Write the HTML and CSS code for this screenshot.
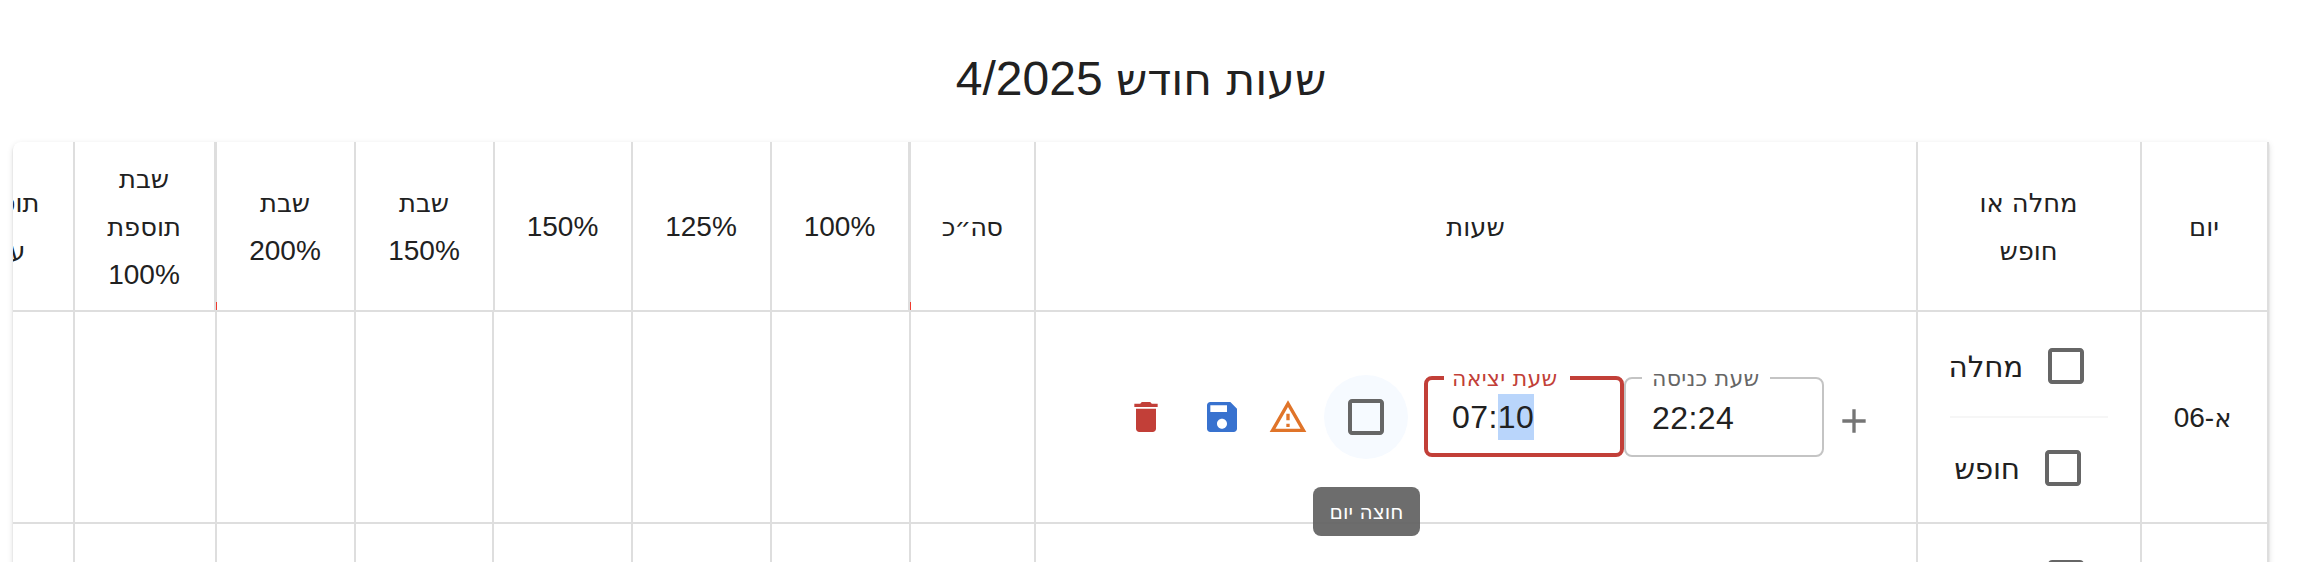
FILE: index.html
```html
<!DOCTYPE html>
<html lang="he" dir="rtl">
<head>
<meta charset="utf-8">
<title>שעות חודש</title>
<link rel="stylesheet" href="styles.css">
</head>
<body>
<h1 class="title"><span class="he">שעות חודש</span> 4/2025</h1>
<main class="paper">
  <div class="row head">
    <div class="cell"><span class="he">יום</span></div>
    <div class="cell"><span class="he">מחלה או</span><span class="he">חופש</span></div>
    <div class="cell"><span class="he">שעות</span></div>
    <div class="cell thick"><span class="he total">סה״כ</span></div>
    <div class="cell"><span dir="ltr">100%</span></div>
    <div class="cell"><span dir="ltr">125%</span></div>
    <div class="cell"><span dir="ltr">150%</span></div>
    <div class="cell"><span class="he">שבת</span><span dir="ltr">150%</span></div>
    <div class="cell thick"><span class="he">שבת</span><span dir="ltr">200%</span></div>
    <div class="cell"><span class="he">שבת</span><span class="he">תוספת</span><span dir="ltr">100%</span></div>
    <div class="cell"><span class="he">תוספת</span><span class="he">ערב</span></div>
  </div>
  <div class="row body">
    <div class="cell day"><span><span class="he">א</span>-06</span></div>
    <div class="cell absence">
      <label class="option"><span class="check"><svg viewBox="0 0 24 24"><path d="M19 5v14H5V5h14m0-2H5c-1.1 0-2 .9-2 2v14c0 1.1.9 2 2 2h14c1.1 0 2-.9 2-2V5c0-1.1-.9-2-2-2z"/></svg></span><span class="name sick"><span class="he">מחלה</span></span></label>
      <div class="divider"></div>
      <label class="option"><span class="check"><svg viewBox="0 0 24 24"><path d="M19 5v14H5V5h14m0-2H5c-1.1 0-2 .9-2 2v14c0 1.1.9 2 2 2h14c1.1 0 2-.9 2-2V5c0-1.1-.9-2-2-2z"/></svg></span><span class="name vacation"><span class="he">חופש</span></span></label>
    </div>
    <div class="cell hours" dir="ltr">
      <svg class="icon delete" viewBox="0 0 24 24"><path d="M6 19c0 1.1.9 2 2 2h8c1.1 0 2-.9 2-2V7H6v12zM19 4h-3.5l-1-1h-5l-1 1H5v2h14V4z"/></svg>
      <svg class="icon save" viewBox="0 0 24 24"><path d="M17 3H5c-1.11 0-2 .9-2 2v14c0 1.1.89 2 2 2h14c1.1 0 2-.9 2-2V7l-4-4zm-5 16c-1.66 0-3-1.34-3-3s1.34-3 3-3 3 1.34 3 3-1.34 3-3 3zm3-10H5V5h10v4z"/></svg>
      <svg class="icon warning" viewBox="0 0 24 24"><path d="M12 5.99L19.53 19H4.47L12 5.99M12 2L1 21h22L12 2zm1 14h-2v2h2v-2zm0-6h-2v4h2v-4z"/></svg>
      <span class="check hovered"><svg viewBox="0 0 24 24"><path d="M19 5v14H5V5h14m0-2H5c-1.1 0-2 .9-2 2v14c0 1.1.9 2 2 2h14c1.1 0 2-.9 2-2V5c0-1.1-.9-2-2-2z"/></svg><span class="tooltip" dir="rtl"><span class="he">חוצה יום</span></span></span>
      <fieldset class="field error"><legend><span class="he">שעת יציאה</span></legend><div class="time">07:<mark>10</mark></div></fieldset>
      <fieldset class="field"><legend><span class="he">שעת כניסה</span></legend><div class="time">22:24</div></fieldset>
      <svg class="icon add" viewBox="0 0 24 24"><path d="M19 13h-6v6h-2v-6H5v-2h6V5h2v6h6v2z"/></svg>
    </div>
    <div class="cell"></div><div class="cell"></div><div class="cell"></div><div class="cell"></div><div class="cell"></div><div class="cell"></div><div class="cell"></div><div class="cell"></div>
  </div>
  <div class="row body last">
    <div class="cell"></div>
    <div class="cell absence">
      <label class="option"><span class="check"><svg viewBox="0 0 24 24"><path d="M19 5v14H5V5h14m0-2H5c-1.1 0-2 .9-2 2v14c0 1.1.9 2 2 2h14c1.1 0 2-.9 2-2V5c0-1.1-.9-2-2-2z"/></svg></span><span class="name sick"></span></label>
    </div>
    <div class="cell"></div><div class="cell"></div><div class="cell"></div><div class="cell"></div><div class="cell"></div><div class="cell"></div><div class="cell"></div><div class="cell"></div><div class="cell"></div>
  </div>
</main>
</body>
</html>
```
FILE: styles.css
```css
* { box-sizing: border-box; }
html { overflow: hidden; }
body {
  margin: 0;
  height: 562px;
  overflow: hidden;
  padding: 49px 43px 0 13px;
  background: #fff;
  color: #212121;
  font-family: "Liberation Sans", Arial, sans-serif;
  font-size: 28px;
}
.he { font-family: "DejaVu Sans", sans-serif; font-size: .92em; }
.title {
  margin: 0 0 33px;
  height: 60px;
  line-height: 60px;
  font-size: 48px;
  font-weight: 400;
  text-align: center;
}
.paper {
  overflow: hidden;
  width: 2256px;
  border-radius: 8px 0 0 0;
  background: #fff;
  box-shadow: 0 4px 2px -2px rgba(0,0,0,.2), 0 2px 2px rgba(0,0,0,.14), 0 2px 6px rgba(0,0,0,.12);
}
.row {
  display: grid;
  width: 2398px;
  grid-template-columns: 129px 224px 882px 125px 139px 139px 139px 138px 139px 142px 142px;
}
.head {
  height: 170px;
  grid-template-columns: 129px 224px 882px 126px 138px 139px 138px 139px 140px 141px 142px;
}
.head .cell { padding: 2px 1px 0 0; }
.body { height: 212px; }
.last { height: 60px; }
.cell {
  border-left: 2px solid #dedede;
  border-bottom: 2px solid #dedede;
  display: flex;
  flex-direction: column;
  align-items: center;
  justify-content: center;
  text-align: center;
  line-height: 48px;
}
.cell:first-child { border-right: 2px solid #dedede; }
.day { padding: 1px 4px 0 0; }
.total { letter-spacing: -.8px; }
.thick {
  border-left-width: 3px;
  position: relative;
}
.thick::after {
  content: "";
  position: absolute;
  left: -1px;
  bottom: 0;
  width: 1px;
  height: 8px;
  background: #f03a2d;
}
.absence { padding: 12px 32px; }
.last .absence { height: 110px; }
.option {
  display: flex;
  justify-content: center;
  align-items: center;
  height: 84px;
  font-size: 32px;
}
.name { white-space: nowrap; letter-spacing: -.2px; }
.sick { width: 74px; padding-right: 1px; }
.vacation { width: 68px; }
.check {
  position: relative;
  display: flex;
  flex: none;
  width: 84px;
  height: 84px;
  padding: 18px;
  border-radius: 50%;
}
.check svg { width: 48px; height: 48px; fill: #666; }
.divider {
  width: 158px;
  height: 2px;
  margin: 8px 0;
  background: #f6f6f6;
}
.hours {
  flex-direction: row;
  justify-content: flex-start;
  padding-left: 90px;
}
.icon { flex: none; width: 40px; height: 40px; }
.delete { fill: #c23f38; margin-right: 36px; }
.save { fill: #3872cf; margin-right: 26px; }
.warning { fill: #e07429; margin-right: 16px; }
.add { fill: #757575; margin: 8px 0 0 10px; }
.hovered { background: #f6faff; margin-right: 16px; }
.tooltip {
  position: absolute;
  top: 112px;
  left: -11px;
  width: 107px;
  height: 49px;
  border-radius: 8px;
  background: rgba(97,97,97,.92);
  color: #fff;
  font-size: 22px;
  line-height: 49px;
  white-space: nowrap;
}
.field {
  width: 200px;
  height: 90px;
  margin: 0 0 10px;
  padding: 6px 0 0 26px;
  border: 2px solid #c4c4c4;
  border-radius: 8px;
  text-align: left;
}
.field legend {
  margin-left: -10px;
  padding: 0 14px 0 10px;
  width: 128px;
  height: 22px;
  line-height: 22px;
  font-size: 24px;
  letter-spacing: .25px;
  color: #666;
  white-space: nowrap;
}
.error {
  border: 4px solid #c23f38;
  padding: 5px 0 0 24px;
}
.error legend { color: #c23f38; width: 126px; margin-left: -8px; padding-left: 8px; }
.time { font-size: 32px; height: 46px; line-height: 46px; letter-spacing: .4px; }
mark { display: inline-block; color: inherit; background: #b9d5fb; }
```
